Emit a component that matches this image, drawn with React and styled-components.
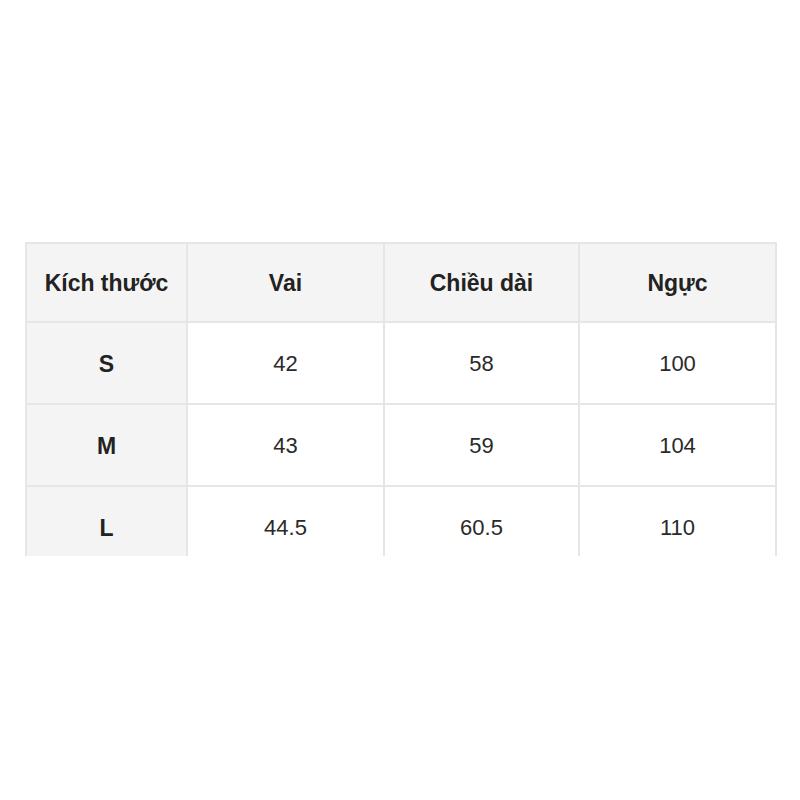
import React from "react";
import styled, { createGlobalStyle } from "styled-components";

const Global = createGlobalStyle`
  html, body { margin: 0; padding: 0; background: #ffffff; }
  body { font-family: "Liberation Sans", Arial, sans-serif; }
`;

const Page = styled.div`
  width: 800px;
  height: 800px;
  padding: 242px 0 0 25px;
  box-sizing: border-box;
`;

const Clip = styled.div`
  width: 752px;
  height: 314px;
  overflow: hidden;
`;

const Table = styled.div`
  display: grid;
  grid-template-columns: 159px 195px 193px 195px;
  grid-auto-rows: 77px 80px 80px 80px;
  gap: 2px;
  padding: 2px 2px 0 2px;
  background: #e6e6e6;
  width: 752px;
  box-sizing: border-box;
`;

const Cell = styled.div`
  display: flex;
  align-items: center;
  justify-content: center;
  padding-top: 2px;
  box-sizing: border-box;
  background: ${(p) => (p.$head ? "#f4f4f4" : "#ffffff")};
  color: ${(p) => (p.$bold ? "#222" : "#2a2a2a")};
  font-size: ${(p) => (p.$bold ? "23px" : "22px")};
  font-weight: ${(p) => (p.$bold ? 700 : 400)};
`;

const header = ["Kích thước", "Vai", "Chiều dài", "Ngực"];
const rows = [
  ["S", "42", "58", "100"],
  ["M", "43", "59", "104"],
  ["L", "44.5", "60.5", "110"],
];

export default function App() {
  return (
    <>
      <Global />
      <Page>
        <Clip>
          <Table>
            {header.map((h) => (
              <Cell key={h} $head $bold>
                {h}
              </Cell>
            ))}
            {rows.map((r) =>
              r.map((v, i) => (
                <Cell key={r[0] + i} $head={i === 0} $bold={i === 0}>
                  {v}
                </Cell>
              ))
            )}
          </Table>
        </Clip>
      </Page>
    </>
  );
}
